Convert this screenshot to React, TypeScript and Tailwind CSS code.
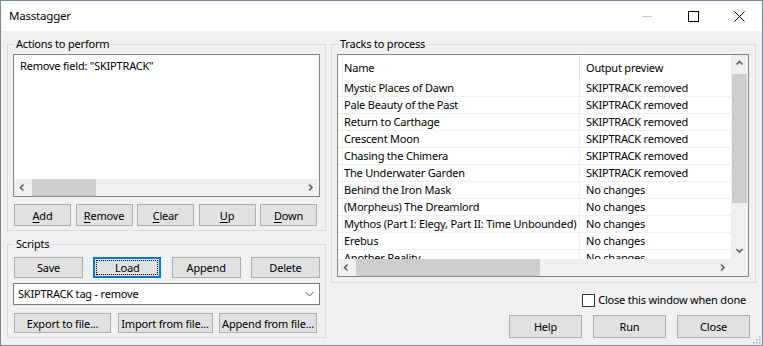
import React from 'react';

const tracks: [string, string][] = [
  ['Mystic Places of Dawn', 'SKIPTRACK removed'],
  ['Pale Beauty of the Past', 'SKIPTRACK removed'],
  ['Return to Carthage', 'SKIPTRACK removed'],
  ['Crescent Moon', 'SKIPTRACK removed'],
  ['Chasing the Chimera', 'SKIPTRACK removed'],
  ['The Underwater Garden', 'SKIPTRACK removed'],
  ['Behind the Iron Mask', 'No changes'],
  ['(Morpheus) The Dreamlord', 'No changes'],
  ['Mythos (Part I: Elegy, Part II: Time Unbounded)', 'No changes'],
  ['Erebus', 'No changes'],
  ['Another Reality', 'No changes'],
];

function Arrow({ dir }: { dir: 'left' | 'right' | 'up' | 'down' }) {
  const d = {
    left: 'M5.5 1.5 L2.5 4.5 L5.5 7.5',
    right: 'M3 1.5 L6 4.5 L3 7.5',
    up: 'M1.5 5.5 L4.5 2.5 L7.5 5.5',
    down: 'M1.5 3 L4.5 6 L7.5 3',
  }[dir];
  return (
    <svg width="9" height="9" viewBox="0 0 9 9">
      <path d={d} fill="none" stroke="#606060" strokeWidth="1.6" />
    </svg>
  );
}

function HScroll({ thumbLeft, thumbWidth }: { thumbLeft: number; thumbWidth: number }) {
  return (
    <div className="h-[17px] flex bg-[#f0f0f0] shrink-0">
      <div className="w-[17px] flex items-center justify-center">
        <Arrow dir="left" />
      </div>
      <div className="flex-1 relative">
        <div className="absolute top-0 bottom-0 bg-[#cdcdcd]" style={{ left: thumbLeft, width: thumbWidth }} />
      </div>
      <div className="w-[17px] flex items-center justify-center">
        <Arrow dir="right" />
      </div>
    </div>
  );
}

function Btn({ children, className = '' }: { children: React.ReactNode; className?: string }) {
  return (
    <button className={`bg-[#e1e1e1] border border-[#adadad] flex items-center justify-center whitespace-nowrap leading-none ${className}`}>
      {children}
    </button>
  );
}

function Mn({ c }: { c: string }) {
  return <span className="underline underline-offset-[2px] decoration-1">{c}</span>;
}

function Legend({ children }: { children: React.ReactNode }) {
  return <legend className="ml-[1px] px-[2px] leading-[16px]">{children}</legend>;
}

export default function App() {
  return (
    <div className="relative w-[763px] h-[346px] border border-[#7a8797] bg-[#f0f0f0] flex flex-col text-black font-['Noto_Sans','Liberation_Sans',sans-serif] text-[11px] tracking-[-0.2px]">
      {/* title bar */}
      <div className="h-[30px] bg-white flex items-center shrink-0">
        <span className="pl-[8px] flex-1 text-[11.5px] leading-[16px] pb-[1px]">Masstagger</span>
        <div className="w-[46px] h-full flex items-center justify-center">
          <div className="w-[10px] h-[1px] bg-[#c8c8c8]" />
        </div>
        <div className="w-[46px] h-full flex items-center justify-center">
          <div className="w-[11px] h-[11px] border border-black" />
        </div>
        <div className="w-[46px] h-full flex items-center justify-center">
          <svg width="11" height="11" viewBox="0 0 11 11">
            <path d="M0.5 0.5 L10.5 10.5 M10.5 0.5 L0.5 10.5" stroke="#000" strokeWidth="1" />
          </svg>
        </div>
      </div>

      <div className="flex pl-[6px] pr-[6px] gap-[5px] mt-[5px]">
        {/* left column */}
        <div className="w-[319px] flex flex-col gap-[5px]">
          <fieldset className="border border-[#dcdcdc] px-[5px] pt-[2px] pb-[4px]">
            <Legend>Actions to perform</Legend>
            <div className="h-[143px] border border-[#828790] bg-white flex flex-col">
              <div className="flex-1 pl-[6px] pt-[3px] leading-[16px]">Remove field: "SKIPTRACK"</div>
              <HScroll thumbLeft={1} thumbWidth={64} />
            </div>
            <div className="mt-[7px] flex justify-between pl-[1px] pr-[3px]">
              <Btn className="w-[57px] h-[22px]"><Mn c="A" />dd</Btn>
              <Btn className="w-[57px] h-[22px]"><Mn c="R" />emove</Btn>
              <Btn className="w-[57px] h-[22px]"><Mn c="C" />lear</Btn>
              <Btn className="w-[57px] h-[22px]"><Mn c="U" />p</Btn>
              <Btn className="w-[57px] h-[22px]"><Mn c="D" />own</Btn>
            </div>
          </fieldset>

          <fieldset className="border border-[#dcdcdc] px-[5px] pt-[5px] pb-[4px]">
            <Legend>Scripts</Legend>
            <div className="flex justify-between pl-[1px]">
              <Btn className="w-[69px] h-[21px]">Save</Btn>
              <button className="w-[68px] h-[21px] bg-[#e1e1e1] border-2 border-[#0078d7] flex p-[1px] leading-none">
                <span className="flex-1 self-stretch border border-dotted border-black flex items-center justify-center">Load</span>
              </button>
              <Btn className="w-[69px] h-[21px]">Append</Btn>
              <Btn className="w-[69px] h-[21px]">Delete</Btn>
            </div>
            <div className="mt-[5px] h-[22px] bg-white border border-[#7a7a7a] flex items-center pl-[4px] pr-[5px]">
              <span className="flex-1 leading-[16px]">SKIPTRACK tag - remove</span>
              <svg width="9" height="6" viewBox="0 0 9 6">
                <path d="M0.5 1 L4.5 5 L8.5 1" fill="none" stroke="#505050" strokeWidth="1" />
              </svg>
            </div>
            <div className="mt-[8px] flex justify-between pl-[1px] pr-[3px]">
              <Btn className="w-[97px] h-[20px]">Export to file...</Btn>
              <Btn className="w-[95px] h-[20px]">Import from file...</Btn>
              <Btn className="w-[98px] h-[20px]">Append from file...</Btn>
            </div>
          </fieldset>
        </div>

        {/* right column */}
        <div className="w-[425px] flex flex-col">
          <fieldset className="border border-[#dcdcdc] pl-[5px] pr-[6px] pt-[2px] pb-[5px]">
            <Legend>Tracks to process</Legend>
            <div className="h-[223px] border border-[#828790] bg-white flex flex-col">
              <div className="flex-1 flex min-h-0">
                <div className="flex-1 overflow-hidden">
                  <div className="h-[25px] flex">
                    <div className="w-[242px] border-r border-[#e5e5e5] pl-[6px] flex items-center leading-[16px]">Name</div>
                    <div className="pl-[6px] flex items-center leading-[16px]">Output preview</div>
                  </div>
                  {tracks.map(([name, out]) => (
                    <div key={name} className="h-[17px] flex border-b border-[#f0f0f0] leading-[16px]">
                      <div className="w-[242px] shrink-0 border-r border-[#f0f0f0] pl-[6px] whitespace-nowrap overflow-hidden">{name}</div>
                      <div className="pl-[6px] whitespace-nowrap">{out}</div>
                    </div>
                  ))}
                </div>
                <div className="w-[17px] bg-[#f0f0f0] flex flex-col">
                  <div className="h-[17px] flex items-center justify-center">
                    <Arrow dir="up" />
                  </div>
                  <div className="flex-1 relative">
                    <div className="absolute left-[1px] right-[1px] top-[2px] h-[129px] bg-[#cdcdcd]" />
                  </div>
                  <div className="h-[17px] flex items-center justify-center">
                    <Arrow dir="down" />
                  </div>
                </div>
              </div>
              <div className="flex">
                <div className="flex-1">
                  <HScroll thumbLeft={1} thumbWidth={184} />
                </div>
                <div className="w-[17px] h-[17px] bg-[#f0f0f0]" />
              </div>
            </div>
          </fieldset>

          <label className="mt-[9px] self-end mr-[10px] flex items-center gap-[3px] leading-[16px]">
            <span className="w-[13px] h-[13px] border border-[#333] bg-white" />
            Close this window when done
          </label>

          <div className="mt-[7px] flex justify-end gap-[11px] pr-[6px]">
            <Btn className="w-[73px] h-[23px]">Help</Btn>
            <Btn className="w-[73px] h-[23px]">Run</Btn>
            <Btn className="w-[73px] h-[23px]">Close</Btn>
          </div>
        </div>
      </div>

      {/* size grip */}
      <svg className="absolute right-[1px] bottom-[1px]" width="9" height="9" viewBox="0 0 9 9">
        {[
          [7, 1],
          [4, 4],
          [7, 4],
          [1, 7],
          [4, 7],
          [7, 7],
        ].map(([x, y]) => (
          <rect key={`${x}-${y}`} x={x} y={y} width="1.5" height="1.5" fill="#b0b0b0" />
        ))}
      </svg>
    </div>
  );
}
